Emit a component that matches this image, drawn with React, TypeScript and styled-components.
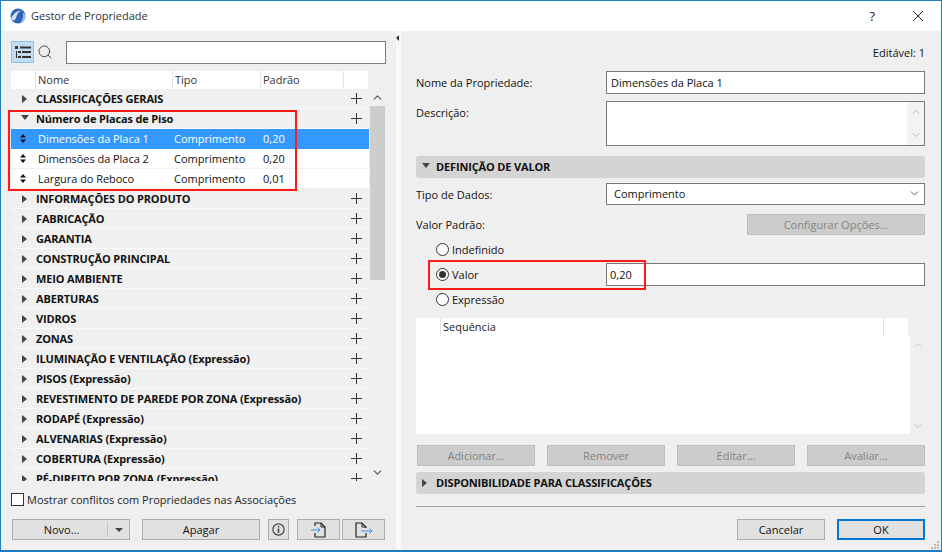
import styled, { createGlobalStyle } from "styled-components";
import { ChevronDown, ChevronUp, Search } from "lucide-react";

const Global = createGlobalStyle`
  html, body {
    margin: 0;
    padding: 0;
    width: 942px;
    height: 552px;
    overflow: hidden;
    background: #efefef;
    font-family: "Open Sans", "Noto Sans", sans-serif;
    font-size: 11px;
    color: #111;
  }
  * { box-sizing: border-box; }
`

const Window = styled.div`
  position: relative;
  width: 942px;
  height: 552px;
  border: 1px solid #1c7cc4;
  border-width: 1px 1px 2px 1px;
  display: flex;
  flex-direction: column;
  background: #efefef;
`

const TitleBar = styled.div`
  height: 30px;
  flex: none;
  background: #fff;
  display: flex;
  align-items: center;
  padding: 0 0 1px 9px;
`

const TitleText = styled.span`
  margin-left: 5px;
  font-size: 11px;
  color: #333;
`

const TitleButtons = styled.div`
  margin-left: auto;
  display: flex;
  align-items: center;
  padding-right: 18px;
  gap: 38px;
  color: #222;
  font-size: 13px;
`

const Body = styled.div`
  flex: 1;
  display: flex;
  min-height: 0;
`

const LeftPane = styled.div`
  width: 395px;
  flex: none;
  padding: 10px 9px 0 10px;
  display: flex;
  flex-direction: column;
`

const Divider = styled.div`
  width: 5px;
  flex: none;
  background: #f8f8f8;
  position: relative;
`

const DividerArrow = styled.div`
  position: absolute;
  top: 4px;
  left: 0;
  width: 0;
  height: 0;
  border-style: solid;
  border-width: 3px 3px 3px 0;
  border-color: transparent #333 transparent transparent;
`

const RightPane = styled.div`
  flex: 1;
  padding: 14px 16px 0 15px;
  display: flex;
  flex-direction: column;
`

const SearchRow = styled.div`
  display: flex;
  align-items: center;
  height: 22px;
`

const ViewToggle = styled.div`
  width: 23px;
  height: 22px;
  background: #c0ddf4;
  border: 1px solid #8fc1e8;
  display: flex;
  align-items: center;
  justify-content: center;
`

const SearchIcon = styled.div`
  width: 32px;
  padding-left: 3px;
  display: flex;
  align-items: center;
  color: #333;
`

const TextBox = styled.div`
  background: #fff;
  border: 1px solid #7a7a7a;
  height: 23px;
  display: flex;
  align-items: center;
  padding-left: 7px;
  font-size: 11px;
  color: #111;
`

const SearchBox = styled(TextBox)`
  width: 320px;
`

const Table = styled.div`
  margin-top: 8px;
  display: flex;
  height: 410px;
`

const TableMain = styled.div`
  width: 358px;
  flex: none;
  overflow: hidden;
`

const HeaderRow = styled.div`
  height: 18px;
  width: 357px;
  background: #fff;
  display: grid;
  grid-template-columns: 24px 137px 88px 83px 25px;
`

const HeaderCell = styled.div`
  border-left: 1px solid #e4e4e4;
  padding: 0 2px;
  line-height: 18px;
  font-size: 11px;
  color: #333;
  &:first-child { border-left: none; }
`

const Row = styled.div<{ $selected?: boolean; $child?: boolean }>`
  height: 20px;
  display: flex;
  align-items: center;
  background: ${(p) => (p.$selected ? "#3399ff" : p.$child ? "#fff" : "#f0f0f0")};
  color: ${(p) => (p.$selected ? "#fff" : "#111")};
  border-bottom: 1px solid ${(p) => (p.$selected ? "#3399ff" : p.$child ? "#f0f0f0" : "#fafafa")};
`

const Toggle = styled.div`
  width: 25px;
  flex: none;
  display: flex;
  justify-content: center;
  padding-left: 2px;
`

const Arrow = styled.div<{ $open?: boolean }>`
  width: 0;
  height: 0;
  border-style: solid;
  ${(p) =>
    p.$open
      ? "border-width: 5px 4.5px 0 4.5px; border-color: #444 transparent transparent transparent; margin: 0 0 2px 0;"
      : "border-width: 4.5px 0 4.5px 5px; border-color: transparent transparent transparent #444;"}
`

const GroupName = styled.div`
  flex: 1;
  font-weight: 700;
  font-size: 11px;
  white-space: nowrap;
  letter-spacing: -0.15px;
`

const AddCell = styled.div`
  width: 26px;
  flex: none;
  display: flex;
  justify-content: center;
`

const SortCell = styled.div`
  width: 27px;
  flex: none;
  display: flex;
  justify-content: center;
  padding-right: 3px;
`

const NameCell = styled.div`
  width: 136px;
  flex: none;
  font-size: 11px;
  white-space: nowrap;
  letter-spacing: -0.05px;
`

const TypeCell = styled.div`
  width: 89px;
  flex: none;
  font-size: 11px;
`

const ValueCell = styled.div`
  font-size: 11px;
`

const ScrollBar = styled.div`
  width: 15px;
  margin-left: 1px;
  margin-top: 18px;
  height: 392px;
  flex: none;
  display: flex;
  flex-direction: column;
  align-items: center;
`

const ScrollBtn = styled.div`
  height: 17px;
  width: 100%;
  flex: none;
  display: flex;
  align-items: center;
  justify-content: center;
  color: #555;
`

const ScrollTrack = styled.div`
  flex: 1;
  width: 100%;
`

const ScrollThumb = styled.div`
  width: 100%;
  height: 174px;
  background: #cdcdcd;
`

const CheckRow = styled.label`
  display: flex;
  align-items: center;
  margin-top: 10px;
  height: 16px;
  font-size: 11px;
  color: #222;
`

const CheckBox = styled.span`
  width: 13px;
  height: 13px;
  background: #fff;
  border: 1px solid #333;
  margin-right: 3px;
  flex: none;
`

const LeftButtons = styled.div`
  display: flex;
  margin-top: 12px;
  margin-left: 1px;
`

const Button = styled.div<{ $w: number; $ml?: number; $disabled?: boolean; $default?: boolean }>`
  width: ${(p) => p.$w}px;
  height: 21px;
  flex: none;
  margin-left: ${(p) => p.$ml ?? 0}px;
  background: ${(p) => (p.$disabled ? "#cccccc" : "#e1e1e1")};
  border: ${(p) => (p.$default ? "2px solid #0078d7" : p.$disabled ? "1px solid #bfbfbf" : "1px solid #adadad")};
  color: ${(p) => (p.$disabled ? "#838383" : "#111")};
  display: flex;
  align-items: center;
  justify-content: center;
  font-size: 11px;
`

const NewMain = styled.div`
  flex: 1;
  text-align: center;
  border-right: 1px solid #c4c4c4;
  height: 15px;
  line-height: 15px;
  padding-left: 3px;
`

const NewDrop = styled.div`
  width: 21px;
  display: flex;
  justify-content: center;
`

const DropArrow = styled.div`
  width: 0;
  height: 0;
  border-style: solid;
  border-width: 4px 4px 0 4px;
  border-color: #444 transparent transparent transparent;
`

const EditableLine = styled.div`
  text-align: right;
  font-size: 11px;
  height: 16px;
  line-height: 16px;
`

const FieldRow = styled.div`
  display: flex;
  align-items: center;
`

const FieldLabel = styled.div`
  width: 190px;
  flex: none;
  font-size: 11px;
`

const NameField = styled(TextBox)`
  flex: 1;
  height: 23px;
  padding-left: 4px;
`

const NameRow = styled(FieldRow)`
  margin-top: 10px;
  margin-bottom: 7px;
`

const DescRow = styled(FieldRow)`
  align-items: flex-start;
`

const DescLabel = styled(FieldLabel)`
  padding-top: 4px;
`

const DescBox = styled(TextBox)`
  flex: 1;
  height: 45px;
  align-items: stretch;
  justify-content: flex-end;
  padding: 0;
`

const MiniScroll = styled.div`
  width: 17px;
  background: #f3f3f3;
  display: flex;
  flex-direction: column;
  justify-content: space-between;
  align-items: center;
  padding: 4px 0;
  color: #bdbdbd;
`

const Section = styled.div`
  height: 22px;
  background: #d4d4d4;
  border-radius: 3px;
  display: flex;
  align-items: center;
  padding: 0 0 1px 6px;
  font-weight: 700;
  font-size: 11px;
  letter-spacing: -0.15px;
`

const SectionArrow = styled.div`
  width: 14px;
  flex: none;
`

const DefSection = styled(Section)`
  margin-top: 10px;
`

const TypeRow = styled(FieldRow)`
  margin-top: 5px;
`

const SelectBox = styled(TextBox)`
  flex: 1;
  height: 22px;
  justify-content: space-between;
  padding: 0 0 1px 7px;
`

const SelectChevron = styled.div`
  width: 20px;
  display: flex;
  justify-content: center;
  color: #444;
`

const DefaultRow = styled(FieldRow)`
  margin-top: 9px;
  justify-content: space-between;
`

const RadioRow = styled(FieldRow)<{ $tall?: boolean; $mt: number }>`
  height: ${(p) => (p.$tall ? "23px" : "15px")};
  padding-left: 20px;
  margin-top: ${(p) => p.$mt}px;
`

const RadioRing = styled.span`
  width: 13px;
  height: 13px;
  border: 1px solid #333;
  border-radius: 50%;
  background: #fff;
  flex: none;
  display: flex;
  align-items: center;
  justify-content: center;
  margin-right: 3px;
`

const RadioDot = styled.span`
  width: 7px;
  height: 7px;
  border-radius: 50%;
  background: #333;
`

const RadioLabel = styled.span<{ $w?: number }>`
  font-size: 11px;
  ${(p) => (p.$w ? `width: ${p.$w}px;` : "")}
`

const ValueField = styled(TextBox)`
  flex: 1;
  padding-left: 3px;
`

const SeqBlock = styled.div`
  margin-top: 11px;
  display: flex;
  height: 116px;
`

const SeqTable = styled.div`
  width: 494px;
  flex: none;
  display: flex;
  flex-direction: column;
  background: #fff;
`

const SeqHeader = styled.div`
  height: 18px;
  background: #efefef;
  display: flex;
`

const SeqHead = styled.div`
  width: 492px;
  background: #fff;
  display: flex;
`

const SeqSpacer = styled.div`
  width: 25px;
  background: #fff;
  border-right: 1px solid #e4e4e4;
`

const SeqTitle = styled.div`
  flex: 1;
  padding-left: 2px;
  line-height: 18px;
  font-size: 11px;
  color: #222;
`

const SeqEnd = styled.div`
  width: 25px;
  background: #fff;
  border-left: 1px solid #e4e4e4;
`

const SeqScroll = styled.div`
  flex: 1;
  display: flex;
  flex-direction: column;
  justify-content: space-between;
  align-items: center;
  padding: 21px 0 2px;
  color: #c4c4c4;
`

const SeqButtons = styled.div`
  display: flex;
  justify-content: space-between;
  margin: 11px 0 0 1px;
`

const AvailSection = styled(Section)`
  margin-top: 6px;
`

const Rule = styled.div`
  height: 1px;
  background: #a0a0a0;
  margin-top: 12px;
`

const FooterButtons = styled.div`
  display: flex;
  justify-content: flex-end;
  gap: 12px;
  margin-top: 12px;
`

const Highlight = styled.div<{ $x: number; $y: number; $w: number; $h: number }>`
  position: absolute;
  left: ${(p) => p.$x}px;
  top: ${(p) => p.$y}px;
  width: ${(p) => p.$w}px;
  height: ${(p) => p.$h}px;
  border: 2px solid #ff1a1a;
  pointer-events: none;
`

const Grip = styled.svg`
  position: absolute;
  right: 1px;
  bottom: 0;
`

const Logo = () => (
  <svg width="16" height="16" viewBox="0 0 16 16">
    <circle cx="8" cy="8" r="7.5" fill="#2f62b4" />
    <path d="M1 11C3 5 8 2 12 2.5 9 3 7 6 6 10 5 13 3 13 1 11Z" fill="#cfdcf2" />
    <path d="M10 15C13 12 14 8 12.5 4L15 7C16 10 14 14 10 15Z" fill="#a8c2ea" />
  </svg>
)

const TreeIcon = () => (
  <svg width="16" height="13" viewBox="0 0 16 13" fill="#333">
    <rect x="0" y="0" width="3" height="3" />
    <rect x="5" y="0.5" width="11" height="2" />
    <rect x="1" y="5" width="1" height="7" />
    <rect x="3" y="5" width="3" height="2" />
    <rect x="7" y="5" width="9" height="2" />
    <rect x="3" y="10" width="3" height="2" />
    <rect x="7" y="10" width="9" height="2" />
  </svg>
)

const Plus = () => (
  <svg width="11" height="11" viewBox="0 0 11 11" stroke="#333" strokeWidth="1">
    <path d="M5.5 0V11M0 5.5H11" />
  </svg>
)

const Sort = () => (
  <svg width="6" height="9" viewBox="0 0 6 9" fill="#111">
    <path d="M3 0L6 3.5H0Z" />
    <path d="M3 9L6 5.5H0Z" />
  </svg>
)

const InfoIcon = () => (
  <svg width="13" height="13" viewBox="0 0 13 13" fill="none" stroke="#444" strokeWidth="1.2">
    <circle cx="6.5" cy="6.5" r="5.6" />
    <path d="M6.5 5.5V10" strokeWidth="1.6" />
    <path d="M6.5 3V4.4" strokeWidth="1.6" />
  </svg>
)

const ImportIcon = () => (
  <svg width="16" height="16" viewBox="0 0 16 16" fill="none">
    <path d="M4 4V1H10L14 5V15H4V11" stroke="#222" strokeWidth="1.2" />
    <path d="M10 1V5H14" stroke="#222" strokeWidth="1" />
    <path d="M0 8H9M6.5 5.5L9 8 6.5 10.5" stroke="#3f8fe8" strokeWidth="1" />
  </svg>
)

const ExportIcon = () => (
  <svg width="18" height="16" viewBox="0 0 18 16" fill="none">
    <path d="M11 6V5L7 1H1V15H11V11" stroke="#222" strokeWidth="1.2" />
    <path d="M7 1V5H11" stroke="#222" strokeWidth="1" />
    <path d="M6 9H17M14.5 6.5L17 9 14.5 11.5" stroke="#3f8fe8" strokeWidth="1" />
  </svg>
)

const groups = [
  "INFORMAÇÕES DO PRODUTO",
  "FABRICAÇÃO",
  "GARANTIA",
  "CONSTRUÇÃO PRINCIPAL",
  "MEIO AMBIENTE",
  "ABERTURAS",
  "VIDROS",
  "ZONAS",
  "ILUMINAÇÃO E VENTILAÇÃO (Expressão)",
  "PISOS (Expressão)",
  "REVESTIMENTO DE PAREDE POR ZONA (Expressão)",
  "RODAPÉ (Expressão)",
  "ALVENARIAS (Expressão)",
  "COBERTURA (Expressão)",
  "PÉ-DIREITO POR ZONA (Expressão)",
];

const children = [
  { name: "Dimensões da Placa 1", value: "0,20", selected: true },
  { name: "Dimensões da Placa 2", value: "0,20", selected: false },
  { name: "Largura do Reboco", value: "0,01", selected: false },
];

const Group = ({ name, open }: { name: string; open?: boolean }) => (
  <Row>
    <Toggle><Arrow $open={open} /></Toggle>
    <GroupName>{name}</GroupName>
    <AddCell><Plus /></AddCell>
  </Row>
)

const App = () => {
  return (
    <Window>
      <Global />
      <TitleBar>
        <Logo />
        <TitleText>Gestor de Propriedade</TitleText>
        <TitleButtons>
          <span>?</span>
          <svg width="10" height="10" viewBox="0 0 10 10" stroke="#222" strokeWidth="1">
            <path d="M0 0L10 10M10 0L0 10" />
          </svg>
        </TitleButtons>
      </TitleBar>
      <Body>
        <LeftPane>
          <SearchRow>
            <ViewToggle><TreeIcon /></ViewToggle>
            <SearchIcon><Search size={16} strokeWidth={1.3} /></SearchIcon>
            <SearchBox />
          </SearchRow>
          <Table>
            <TableMain>
              <HeaderRow>
                <HeaderCell />
                <HeaderCell>Nome</HeaderCell>
                <HeaderCell>Tipo</HeaderCell>
                <HeaderCell>Padrão</HeaderCell>
                <HeaderCell />
              </HeaderRow>
              <Group name="CLASSIFICAÇÕES GERAIS" />
              <Group name="Número de Placas de Piso" open />
              {children.map((c) => (
                <Row key={c.name} $child $selected={c.selected}>
                  <SortCell><Sort /></SortCell>
                  <NameCell>{c.name}</NameCell>
                  <TypeCell>Comprimento</TypeCell>
                  <ValueCell>{c.value}</ValueCell>
                </Row>
              ))}
              {groups.map((g) => <Group key={g} name={g} />)}
            </TableMain>
            <ScrollBar>
              <ScrollBtn><ChevronUp size={13} strokeWidth={2} /></ScrollBtn>
              <ScrollTrack><ScrollThumb /></ScrollTrack>
              <ScrollBtn><ChevronDown size={13} strokeWidth={2} /></ScrollBtn>
            </ScrollBar>
          </Table>
          <CheckRow><CheckBox />Mostrar conflitos com Propriedades nas Associações</CheckRow>
          <LeftButtons>
            <Button $w={118}>
              <NewMain>Novo...</NewMain>
              <NewDrop><DropArrow /></NewDrop>
            </Button>
            <Button $w={118} $ml={12}>Apagar</Button>
            <Button $w={21} $ml={8}><InfoIcon /></Button>
            <Button $w={43} $ml={8}><ImportIcon /></Button>
            <Button $w={43} $ml={2}><ExportIcon /></Button>
          </LeftButtons>
        </LeftPane>
        <Divider><DividerArrow /></Divider>
        <RightPane>
          <EditableLine>Editável: 1</EditableLine>
          <NameRow>
            <FieldLabel>Nome da Propriedade:</FieldLabel>
            <NameField>Dimensões da Placa 1</NameField>
          </NameRow>
          <DescRow>
            <DescLabel>Descrição:</DescLabel>
            <DescBox>
              <MiniScroll>
                <ChevronUp size={12} strokeWidth={2} />
                <ChevronDown size={12} strokeWidth={2} />
              </MiniScroll>
            </DescBox>
          </DescRow>
          <DefSection>
            <SectionArrow><Arrow $open /></SectionArrow>
            DEFINIÇÃO DE VALOR
          </DefSection>
          <TypeRow>
            <FieldLabel>Tipo de Dados:</FieldLabel>
            <SelectBox>
              Comprimento
              <SelectChevron><ChevronDown size={13} strokeWidth={1.5} /></SelectChevron>
            </SelectBox>
          </TypeRow>
          <DefaultRow>
            <FieldLabel>Valor Padrão:</FieldLabel>
            <Button $w={178} $disabled>Configurar Opções...</Button>
          </DefaultRow>
          <RadioRow $mt={7}>
            <RadioRing />
            <RadioLabel>Indefinido</RadioLabel>
          </RadioRow>
          <RadioRow $tall $mt={6}>
            <RadioRing><RadioDot /></RadioRing>
            <RadioLabel $w={154}>Valor</RadioLabel>
            <ValueField>0,20</ValueField>
          </RadioRow>
          <RadioRow $mt={6}>
            <RadioRing />
            <RadioLabel>Expressão</RadioLabel>
          </RadioRow>
          <SeqBlock>
            <SeqTable>
              <SeqHeader>
                <SeqHead>
                  <SeqSpacer />
                  <SeqTitle>Sequência</SeqTitle>
                  <SeqEnd />
                </SeqHead>
              </SeqHeader>
            </SeqTable>
            <SeqScroll>
              <ChevronUp size={12} strokeWidth={2} />
              <ChevronDown size={12} strokeWidth={2} />
            </SeqScroll>
          </SeqBlock>
          <SeqButtons>
            <Button $w={118} $disabled>Adicionar...</Button>
            <Button $w={118} $disabled>Remover</Button>
            <Button $w={118} $disabled>Editar...</Button>
            <Button $w={118} $disabled>Avaliar...</Button>
          </SeqButtons>
          <AvailSection>
            <SectionArrow><Arrow /></SectionArrow>
            DISPONIBILIDADE PARA CLASSIFICAÇÕES
          </AvailSection>
          <Rule />
          <FooterButtons>
            <Button $w={88}>Cancelar</Button>
            <Button $w={88} $default>OK</Button>
          </FooterButtons>
        </RightPane>
      </Body>
      <Highlight $x={7} $y={109} $w={289} $h={81} />
      <Highlight $x={427} $y={259} $w={218} $h={30} />
      <Grip width="10" height="10" viewBox="0 0 10 10" fill="#b8b8b8">
        <rect x="7" y="1" width="2" height="2" />
        <rect x="4" y="4" width="2" height="2" />
        <rect x="7" y="4" width="2" height="2" />
        <rect x="1" y="7" width="2" height="2" />
        <rect x="4" y="7" width="2" height="2" />
        <rect x="7" y="7" width="2" height="2" />
      </Grip>
    </Window>
  )
}

export default App;
